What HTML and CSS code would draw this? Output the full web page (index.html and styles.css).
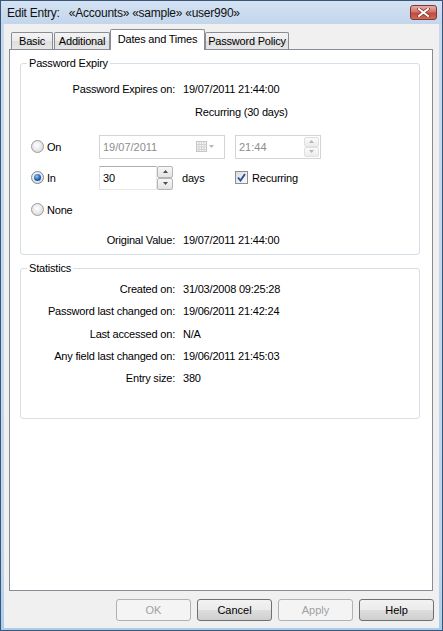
FILE: index.html
```html
<!DOCTYPE html>
<html>
<head>
<meta charset="utf-8">
<title>Edit Entry</title>
<link rel="stylesheet" href="styles.css">
</head>
<body>
<div class="window">
  <div class="titlebar">
    <span class="title">Edit Entry:&nbsp;&nbsp; «Accounts» «sample» «user990»</span>
    <div class="close">
      <svg width="13" height="9" viewBox="0 0 13 9"><path d="M2 1 L11 8 M11 1 L2 8" stroke="#7a2a22" stroke-width="3.4" stroke-linecap="square"/><path d="M2 1 L11 8 M11 1 L2 8" stroke="#ffffff" stroke-width="2" stroke-linecap="square"/></svg>
    </div>
  </div>
  <div class="client">
    <div class="tabs">
      <div class="tab t-basic">Basic</div>
      <div class="tab t-add">Additional</div>
      <div class="tab t-sel">Dates and Times</div>
      <div class="tab t-pol">Password Policy</div>
    </div>
    <div class="panel">
      <div class="group g-expiry">
        <div class="legend">Password Expiry</div>
        <div class="kv r-first"><span class="k">Password Expires on:</span><span class="v">19/07/2011 21:44:00</span></div>
        <div class="note">Recurring (30 days)</div>
        <div class="opt opt-on">
          <div class="radio-l"><span class="radio"></span><span>On</span></div>
          <div class="field date disabled">
            <span class="ftext">19/07/2011</span>
            <svg class="cal" width="20" height="12" viewBox="0 0 20 12">
              <rect x="0.5" y="0.5" width="10" height="10" fill="#f4f4f4" stroke="#c4c4c4"/>
              <path d="M0.5 3.5 H10.5 M0.5 6 H10.5 M0.5 8.5 H10.5 M3 0.5 V10.5 M5.5 0.5 V10.5 M8 0.5 V10.5" stroke="#d2d2d2" stroke-width="1"/>
              <path d="M13 4 L18 4 L15.5 7 Z" fill="#b8b8b8"/>
            </svg>
          </div>
          <div class="field time disabled">
            <span class="ftext">21:44</span>
            <div class="spin in-field">
              <div class="sbtn"><svg width="5" height="3" viewBox="0 0 5 3"><path d="M0 3 L2.5 0 L5 3 Z" fill="#b5b5b5"/></svg></div>
              <div class="sbtn"><svg width="5" height="3" viewBox="0 0 5 3"><path d="M0 0 L2.5 3 L5 0 Z" fill="#b5b5b5"/></svg></div>
            </div>
          </div>
        </div>
        <div class="opt opt-in">
          <div class="radio-l"><span class="radio checked"><span class="dot"></span></span><span>In</span></div>
          <div class="field num"><span class="ftext dark">30</span></div>
          <div class="spin ext">
            <div class="sbtn"><svg width="5" height="3" viewBox="0 0 5 3"><path d="M0 3 L2.5 0 L5 3 Z" fill="#4d4d4d"/></svg></div>
            <div class="sbtn"><svg width="5" height="3" viewBox="0 0 5 3"><path d="M0 0 L2.5 3 L5 0 Z" fill="#4d4d4d"/></svg></div>
          </div>
          <span class="days">days</span>
          <span class="check"><svg width="9" height="9" viewBox="0 0 9 9"><path d="M1 4.5 L3.5 7.5 L8 1" fill="none" stroke="#2a4f9e" stroke-width="1.9"/></svg></span>
          <span class="check-l">Recurring</span>
        </div>
        <div class="opt opt-none">
          <div class="radio-l"><span class="radio"></span><span>None</span></div>
        </div>
        <div class="kv r-orig"><span class="k">Original Value:</span><span class="v">19/07/2011 21:44:00</span></div>
      </div>

      <div class="group g-stats">
        <div class="legend">Statistics</div>
        <div class="kv s1"><span class="k">Created on:</span><span class="v">31/03/2008 09:25:28</span></div>
        <div class="kv s2"><span class="k">Password last changed on:</span><span class="v">19/06/2011 21:42:24</span></div>
        <div class="kv s3"><span class="k">Last accessed on:</span><span class="v">N/A</span></div>
        <div class="kv s4"><span class="k">Any field last changed on:</span><span class="v">19/06/2011 21:45:03</span></div>
        <div class="kv s5"><span class="k">Entry size:</span><span class="v">380</span></div>
      </div>
    </div>
    <div class="buttons">
      <div class="btn disabled">OK</div>
      <div class="btn">Cancel</div>
      <div class="btn disabled">Apply</div>
      <div class="btn">Help</div>
    </div>
  </div>
</div>
</body>
</html>
```

FILE: styles.css
```css
* { box-sizing: border-box; }
html, body { margin: 0; padding: 0; }
body {
  width: 443px;
  height: 631px;
  overflow: hidden;
  font-family: "Liberation Sans", Arial, sans-serif;
  font-size: 11px;
  letter-spacing: -0.2px;
  color: #000;
  background: #fff;
}
.window {
  width: 443px;
  height: 631px;
  border: 1px solid #3b5577;
  background: linear-gradient(to bottom, #c8daef, #c0d5ec 90%, #a9cdee);
  padding: 0 3px 2px 3px;
  display: flex;
  flex-direction: column;
}
.titlebar {
  height: 23px;
  margin: 0 -3px;
  padding: 0 5px 0 6px;
  display: flex;
  align-items: center;
  background: linear-gradient(to bottom, #d4e2f3, #c3d6ec);
}
.title {
  font-size: 12px;
  letter-spacing: -0.25px;
  color: #111;
}
.close {
  margin-left: auto;
  margin-top: -1px;
  width: 27px;
  height: 15px;
  border: 1px solid #7c3a34;
  border-radius: 3px;
  background: linear-gradient(to bottom, #e8aea6, #d2746a 45%, #c24a3e 55%, #cf6a58);
  display: flex;
  align-items: center;
  justify-content: center;
}
.client {
  flex: 1;
  background: #f0f0f0;
  display: flex;
  flex-direction: column;
}
.tabs {
  display: flex;
  align-items: flex-end;
  height: 20px;
  margin-top: 5px;
  padding-left: 7px;
}
.tab {
  height: 17px;
  border: 1px solid #898c95;
  border-bottom: none;
  border-radius: 2px 2px 0 0;
  background: linear-gradient(to bottom, #f4f4f4, #ebebeb 50%, #dedede 51%, #e6e6e6);
  display: flex;
  align-items: center;
  justify-content: center;
  padding-bottom: 1px;
}
.t-basic { width: 42px; margin-right: 1px; }
.t-add { width: 56px; }
.t-sel {
  width: 95px;
  height: 21px;
  margin-bottom: -1px;
  background: #fff;
  position: relative;
  z-index: 1;
  padding-bottom: 3px;
}
.t-pol { width: 84px; }
.panel {
  height: 542px;
  margin: 0 6px 0 5px;
  border: 1px solid #898c95;
  background: #fff;
  padding: 13px 12px 0 10px;
}
.group {
  border: 1px solid #d5dfe5;
  border-radius: 3px;
}
.legend {
  width: fit-content;
  margin: -7px 0 0 6px;
  padding: 0 2px;
  line-height: 13px;
  height: 13px;
  background: #fff;
}
.g-expiry { height: 192px; }
.g-stats { height: 151px; margin-top: 13px; }
.kv {
  display: flex;
  align-items: center;
  height: 22px;
}
.kv .k {
  width: 154px;
  text-align: right;
  flex: none;
}
.kv .v { margin-left: 8px; }
.r-first { margin-top: 8px; }
.note {
  height: 22px;
  line-height: 22px;
  padding-left: 174px;
  margin-top: 1px;
}
.opt {
  display: flex;
  align-items: center;
  height: 25px;
}
.opt-on { margin-top: 11px; }
.opt-in { margin-top: 6px; }
.opt-none { margin-top: 7px; }
.r-orig { margin-top: 7px; }
.radio-l {
  width: 78px;
  flex: none;
  padding-left: 10px;
  display: flex;
  align-items: center;
  gap: 3px;
}
.radio {
  width: 13px;
  height: 13px;
  border-radius: 50%;
  border: 1px solid #9a9a9a;
  background: radial-gradient(circle at 45% 40%, #ffffff, #e6e6e6 55%, #cfcfcf);
  display: flex;
  align-items: center;
  justify-content: center;
  flex: none;
}
.radio.checked { border-color: #7c8693; }
.dot {
  width: 7px;
  height: 7px;
  border-radius: 50%;
  background: radial-gradient(circle at 40% 35%, #8fc4f5, #1f5fb0 55%, #0c3b7a);
}
.field {
  height: 24px;
  border: 1px solid #abadb3;
  border-color: #abadb3 #e3e9ef #e3e9ef #e2e3ea;
  background: #fff;
  display: flex;
  align-items: center;
  padding-left: 3px;
}
.field.disabled { border-color: #d2d4d8; }
.ftext { color: #8d8d8d; letter-spacing: 0; }
.ftext.dark { color: #000; }
.date { width: 126px; }
.cal { margin-left: auto; margin-right: 8px; }
.time { width: 86px; margin-left: 10px; padding-right: 1px; }
.num { width: 58px; height: 24px; }
.spin {
  display: flex;
  flex-direction: column;
  gap: 0;
}
.in-field { margin-left: auto; width: 15px; height: 20px; }
.ext { width: 16px; height: 24px; margin-left: 0; }
.sbtn {
  flex: 1;
  border: 1px solid #c9c9c9;
  border-radius: 2px;
  background: linear-gradient(to bottom, #fafafa, #ececec);
  display: flex;
  align-items: center;
  justify-content: center;
}
.ext .sbtn { border-color: #b5b5b5; background: linear-gradient(to bottom, #f7f7f7, #e3e3e3); }
.in-field .sbtn { border-color: #e0e0e0; }
.days { width: 53px; margin-left: 9px; }
.check {
  width: 13px;
  height: 13px;
  border: 1px solid #8e8f8f;
  background: linear-gradient(135deg, #dcdcdc, #fafafa);
  display: flex;
  align-items: center;
  justify-content: center;
  flex: none;
}
.check-l { margin-left: 4px; }
.g-stats .legend { margin-bottom: 2px; }
.s1 { height: 23px; margin-top: 2px; }
.s2 { height: 22px; }
.s3 { height: 23px; }
.s4 { height: 21px; }
.s5 { height: 24px; }
.buttons {
  display: flex;
  justify-content: flex-end;
  gap: 6px;
  margin-top: 8px;
  padding-right: 5px;
}
.btn {
  width: 75px;
  height: 22px;
  border: 1px solid #707070;
  border-radius: 3px;
  background: linear-gradient(to bottom, #f2f2f2, #ebebeb 50%, #dddddd 51%, #cfcfcf);
  display: flex;
  align-items: center;
  justify-content: center;
  letter-spacing: 0;
}
.btn.disabled {
  border-color: #adb2b5;
  background: #f4f4f4;
  color: #a0a0a0;
}
```
